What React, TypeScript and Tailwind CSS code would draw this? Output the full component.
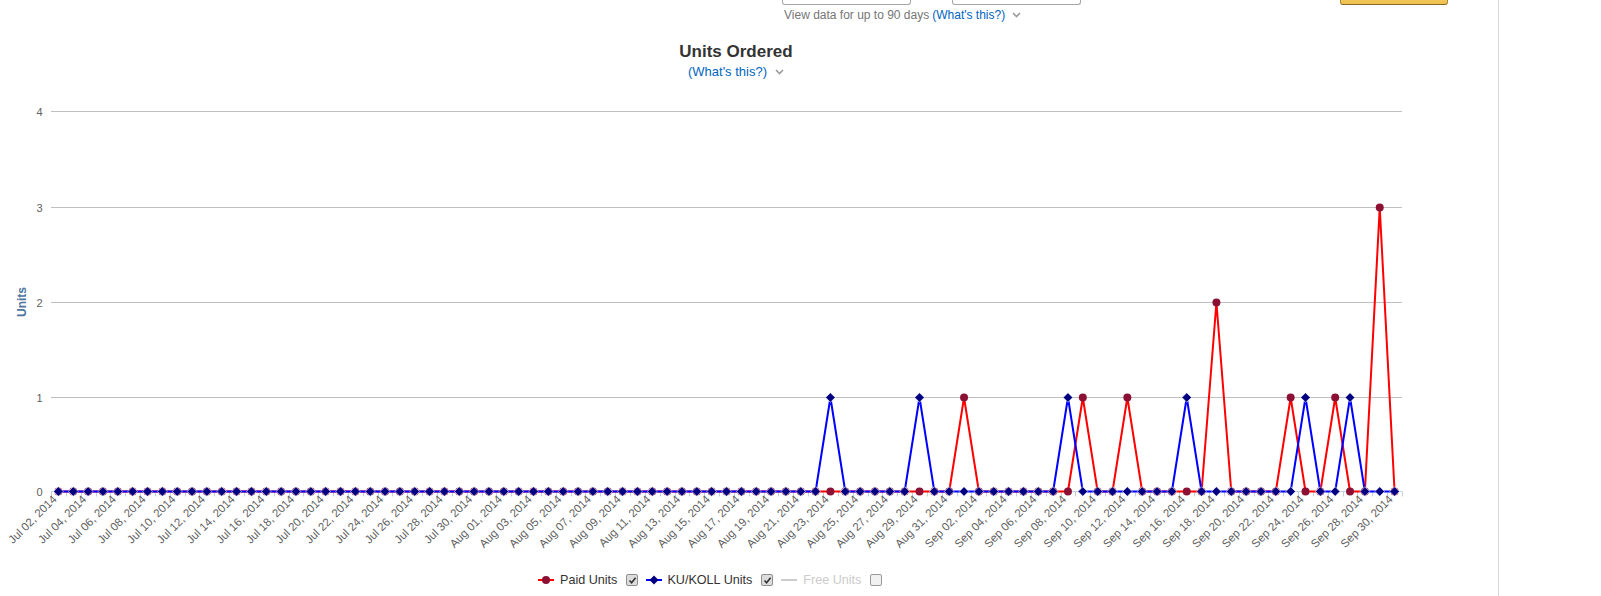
import React from "react";

const N = 91;
const X0 = 51;
const PW = 1351;
const STEP = PW / N;
const G = [491.5, 397.5, 302.5, 207.5, 111.5];
const cx = (i: number) => X0 + (i + 0.5) * STEP;
const MONTHS = ["Jan", "Feb", "Mar", "Apr", "May", "Jun", "Jul", "Aug", "Sep", "Oct", "Nov", "Dec"];

const paid: number[] = Array(N).fill(0);
[[61, 1], [69, 1], [72, 1], [78, 2], [83, 1], [86, 1], [89, 3]].forEach(([i, v]) => (paid[i] = v));
const ku: number[] = Array(N).fill(0);
[52, 58, 68, 76, 84, 87].forEach((i) => (ku[i] = 1));

function dateLabel(i: number) {
  const d = new Date(Date.UTC(2014, 6, 2 + i));
  return `${MONTHS[d.getUTCMonth()]} ${String(d.getUTCDate()).padStart(2, "0")}, 2014`;
}

const pathOf = (arr: number[]) =>
  arr.map((v, i) => `${i === 0 ? "M" : "L"}${cx(i).toFixed(2)},${G[v]}`).join(" ");

function Chevron() {
  return (
    <svg width="9" height="6" viewBox="0 0 9 6" className="block">
      <path d="M1 1 L4.5 4.5 L8 1" stroke="#9a9a9a" strokeWidth="1.6" fill="none" />
    </svg>
  );
}

function CheckBox({ checked }: { checked: boolean }) {
  return (
    <span
      className={
        checked
          ? "flex w-[12px] h-[12px] items-center justify-center border border-[#8e8f8f] bg-[#dcdcdc] rounded-[2px]"
          : "flex w-[12px] h-[12px] border border-[#9a9a9a] bg-[#f1f1f1] rounded-[2px]"
      }
    >
      {checked && (
        <svg width="9" height="9" viewBox="0 0 9 9" className="block">
          <path d="M1.5 4.5 L3.6 6.8 L7.6 1.8" stroke="#333" strokeWidth="1.6" fill="none" />
        </svg>
      )}
    </span>
  );
}

function Chart() {
  const ticks = Array.from({ length: N + 1 }, (_, k) => Math.round(X0 + k * STEP) + 0.5);
  return (
    <svg width="1472" height="480" viewBox="0 80 1472 480" className="block" fontFamily="'Liberation Sans', Arial, sans-serif">
      {G.slice(1).map((y, i) => (
        <line key={i} x1={X0} x2={X0 + PW} y1={y} y2={y} stroke="#c0c0c0" strokeWidth="1" />
      ))}
      {G.map((y, v) => (
        <text key={v} x={42.5} y={y + 4} textAnchor="end" fontSize="11" fill="#606060">
          {v}
        </text>
      ))}
      <text transform="translate(26,302) rotate(-90)" textAnchor="middle" fontSize="12" fontWeight="bold" fill="#4d759e">
        Units
      </text>
      <line x1={X0} x2={X0 + PW} y1={G[0]} y2={G[0]} stroke="#c0d0e0" strokeWidth="1" />
      {ticks.map((x, k) => (
        <line key={k} x1={x} x2={x} y1={G[0]} y2={G[0] + 5} stroke="#c0d0e0" strokeWidth="1" />
      ))}
      {Array.from({ length: 46 }, (_, j) => j * 2).map((i) => (
        <text
          key={i}
          transform={`translate(${(cx(i) - 1).toFixed(2)},500) rotate(-45)`}
          textAnchor="end"
          fontSize="11.5"
          fill="#5f5f5f"
        >
          {dateLabel(i)}
        </text>
      ))}
      <path d={pathOf(paid)} stroke="#ff0000" strokeWidth="2" fill="none" strokeLinejoin="round" />
      {paid.map((v, i) => (
        <circle key={i} cx={cx(i)} cy={G[v]} r="4" fill="#8c1034" />
      ))}
      <path d={pathOf(ku)} stroke="#0000ff" strokeWidth="2" fill="none" strokeLinejoin="round" />
      {ku.map((v, i) => {
        const x = cx(i);
        const y = G[v];
        return (
          <path
            key={i}
            d={`M${x},${y - 4.8} L${x + 4.8},${y} L${x},${y + 4.8} L${x - 4.8},${y} Z`}
            fill="#000080"
            stroke="#ffffff"
            strokeOpacity="0.6"
            strokeWidth="1"
          />
        );
      })}
    </svg>
  );
}

export default function App() {
  return (
    <div className="flex w-[1601px] h-[596px] overflow-hidden bg-white font-['Liberation_Sans',Arial,sans-serif]">
      <div className="w-[1499px] shrink-0 border-r border-[#d6d6d6]">
        <div className="flex items-end h-[5px] overflow-hidden pl-[782px]">
          <div className="w-[129px] h-[30px] shrink-0 rounded-[3px] border border-[#a6a6a6] border-t-[#949494] bg-white" />
          <div className="w-[129px] h-[30px] shrink-0 ml-[41px] rounded-[3px] border border-[#a6a6a6] border-t-[#949494] bg-white" />
          <div className="w-[108px] h-[30px] shrink-0 ml-[259px] rounded-[3px] border border-[#a88734] border-b-[#846a29] bg-gradient-to-b from-[#f7dfa5] to-[#f0c14b]" />
        </div>
        <div className="flex items-center h-[16px] mt-[2px] pl-[784px] text-[12px] leading-[16px] whitespace-nowrap">
          <span className="text-[#767676]">View data for up to 90 days</span>
          <span className="ml-[3px] text-[#0066c0]">(What's this?)</span>
          <span className="ml-[7px]">
            <Chevron />
          </span>
        </div>
        <div className="w-[1472px] mt-[19px] h-[20px] text-center text-[17px] leading-[20px] font-bold text-[#333333]">
          Units Ordered
        </div>
        <div className="w-[1472px] mt-[2px] h-[16px] flex items-center justify-center text-[13px] leading-[16px]">
          <span className="text-[#0066c0]">(What's this?)</span>
          <span className="ml-[8px]">
            <Chevron />
          </span>
        </div>
        <Chart />
        <div className="flex items-center h-[16px] mt-[12px] pl-[538px] text-[12.6px] leading-[16px] whitespace-nowrap">
          <svg width="16" height="10" viewBox="0 0 16 10" className="block">
            <line x1="0" x2="16" y1="5" y2="5" stroke="#ff0000" strokeWidth="2" />
            <circle cx="8" cy="5" r="4" fill="#8c1034" />
          </svg>
          <span className="ml-[6px] text-[#333333]">Paid Units</span>
          <span className="ml-[9px]">
            <CheckBox checked />
          </span>
          <svg width="16" height="10" viewBox="0 0 16 10" className="block ml-[8px]">
            <line x1="0" x2="16" y1="5" y2="5" stroke="#0000ff" strokeWidth="2" />
            <path d="M8,0.5 L12.5,5 L8,9.5 L3.5,5 Z" fill="#000080" />
          </svg>
          <span className="ml-[5px] text-[#333333]">KU/KOLL Units</span>
          <span className="ml-[9px]">
            <CheckBox checked />
          </span>
          <svg width="16" height="10" viewBox="0 0 16 10" className="block ml-[8px]">
            <line x1="0" x2="16" y1="5" y2="5" stroke="#cccccc" strokeWidth="2" />
          </svg>
          <span className="ml-[6px] text-[#cccccc]">Free Units</span>
          <span className="ml-[9px]">
            <CheckBox checked={false} />
          </span>
        </div>
      </div>
      <div className="flex-1 bg-white" />
    </div>
  );
}
